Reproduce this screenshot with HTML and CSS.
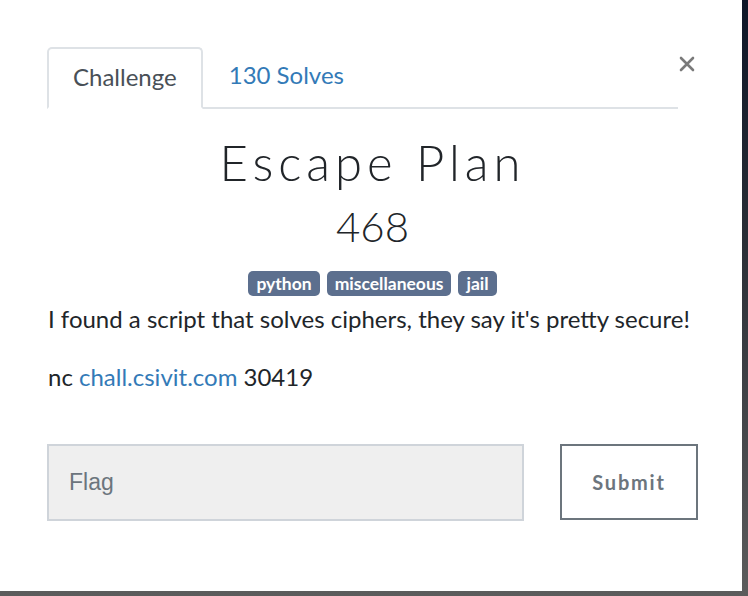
FILE: index.html
```html
<!DOCTYPE html>
<html>
<head>
<meta charset="utf-8">
<link rel="stylesheet" href="styles.css">
</head>
<body>
<div class="modal">
  <button class="close" aria-label="Close">
    <svg width="16" height="16" viewBox="0 0 16 16"><path d="M2 2 L14 14 M14 2 L2 14" stroke="#7a7a7a" stroke-width="2.6" stroke-linecap="round"/></svg>
  </button>
  <div class="content">
    <ul class="tabs">
      <li class="tab active">Challenge</li>
      <li class="tab link">130 Solves</li>
    </ul>
    <h2 class="title">Escape Plan</h2>
    <h3 class="value">468</h3>
    <div class="tags">
      <span class="tag">python</span>
      <span class="tag">miscellaneous</span>
      <span class="tag">jail</span>
    </div>
    <p class="desc">I found a script that solves ciphers, they say it's pretty secure!</p>
    <p class="desc">nc <a class="link" href="#">chall.csivit.com</a> 30419</p>
    <form class="form">
      <input class="flag" type="text" placeholder="Flag">
      <button class="submit" type="button">Submit</button>
    </form>
  </div>
</div>
</body>
</html>
```
FILE: styles.css
```css
* { box-sizing: border-box; }
html, body { margin: 0; padding: 0; }
body {
  width: 748px;
  height: 596px;
  background: linear-gradient(#0e1628, #2a2e36 40%, #5c5c5c);
  font-family: Lato, "Noto Sans", sans-serif;
  overflow: hidden;
}
.modal {
  position: relative;
  width: 742px;
  height: 591px;
  background: #fff;
}
.close {
  position: absolute;
  top: 56px;
  left: 679px;
  padding: 0;
  border: 0;
  background: none;
  width: 16px;
  height: 16px;
}
.close svg { display: block; }
.content {
  padding: 47px 44px 0 47px;
}
.tabs {
  list-style: none;
  margin: 0 20px 0 0;
  padding: 0;
  display: flex;
  border-bottom: 2px solid #dee2e6;
  height: 62px;
}
.tab {
  font-size: 24px;
  padding: 0 25px 0 26px;
  line-height: 56px;
  color: #495057;
  margin-bottom: -2px;
}
.tab.active {
  border: 2px solid #dee2e6;
  border-bottom-color: #fff;
  border-radius: 5px 5px 0 0;
  background: #fff;
  height: 62px;
  padding: 0 24px;
}
.tab.link { color: #337ab7; }
.title {
  margin: 24px 0 0;
  text-align: center;
  font-family: Lato, sans-serif;
  font-weight: 300;
  font-size: 49px;
  letter-spacing: 5px;
  line-height: 58px;
  color: #212529;
}
.value {
  margin: 11px 0 0;
  text-align: center;
  font-weight: 300;
  font-size: 42px;
  line-height: 48px;
  color: #212529;
}
.tags {
  margin-top: 21px;
  display: flex;
  justify-content: center;
  gap: 7px;
}
.tag {
  background: #5c6f8e;
  color: #fff;
  font-weight: 700;
  font-size: 17.5px;
  line-height: 25px;
  padding: 0 8px;
  border-radius: 5px;
}
.desc {
  margin: 6px 0 0;
  font-size: 24px;
  line-height: 34px;
  color: #212529;
  padding-left: 1px;
}
.desc + .desc { margin-top: 24px; }
.link { color: #337ab7; text-decoration: none; }
.form {
  margin-top: 50px;
  display: flex;
  justify-content: space-between;
}
.flag {
  width: 477px;
  height: 77px;
  background: #efefef;
  border: 2px solid #cfd4da;
  padding: 0 20px;
  font-family: "Liberation Sans", Arial, sans-serif;
  font-size: 23px;
  color: #495057;
  outline: none;
}
.flag::placeholder { color: #6c757d; }
.submit {
  width: 138px;
  height: 76px;
  background: #fff;
  border: 2px solid #6c757d;
  color: #6c757d;
  font-family: Lato, sans-serif;
  font-weight: 700;
  font-size: 20px;
  letter-spacing: 1.8px;
}
```
